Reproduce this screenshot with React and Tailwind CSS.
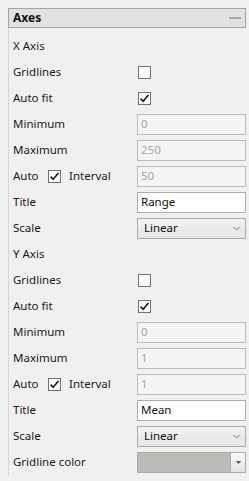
import React from "react";

const font = { fontFamily: '"Noto Sans", "Segoe UI", Arial, sans-serif' };

function Check({ checked }) {
  return (
    <div className="w-[13px] h-[13px] border border-[#707070] bg-white flex items-center justify-center shrink-0">
      {checked && (
        <svg width="11" height="11" viewBox="0 0 11 11">
          <path d="M1.6 5.6 L4.2 8.2 L9.4 2" fill="none" stroke="#202020" strokeWidth="1.7" />
        </svg>
      )}
    </div>
  );
}

function Row({ children }) {
  return <div className="h-[26px] flex items-center">{children}</div>;
}

function Label({ children }) {
  return <div className="w-[124px] shrink-0 text-[11.5px] text-[#1a1a1a] leading-none">{children}</div>;
}

function Disabled({ value }) {
  return (
    <div className="w-[109px] h-[21px] border border-[#bcbcbc] bg-[#f4f4f4] flex items-center pl-[3px] text-[11.5px] text-[#a6a6a6] leading-none">
      {value}
    </div>
  );
}

function TextBox({ value }) {
  return (
    <div className="w-[109px] h-[21px] border border-[#abadb3] bg-white flex items-center pl-[3px] text-[11.5px] text-[#101010] leading-none">
      {value}
    </div>
  );
}

function Combo({ value }) {
  return (
    <div className="w-[109px] h-[21px] border border-[#acacac] bg-gradient-to-b from-[#f2f2f2] to-[#e5e5e5] flex items-center justify-between pl-[6px] pr-[5px] text-[11.5px] text-[#101010] leading-none">
      <span>{value}</span>
      <svg width="7" height="5" viewBox="0 0 7 5">
        <path d="M0.5 1 L3.5 4 L6.5 1" fill="none" stroke="#707070" strokeWidth="1" />
      </svg>
    </div>
  );
}

function ColorPick() {
  return (
    <div className="w-[109px] h-[21px] border border-[#acacac] flex">
      <div className="flex-1 bg-[#bdbcb8]" />
      <div className="w-[15px] border-l border-[#acacac] bg-gradient-to-b from-[#fafafa] to-[#e2e2e2] flex items-center justify-center">
        <svg width="5" height="3" viewBox="0 0 5 3">
          <path d="M0 0 L5 0 L2.5 3 Z" fill="#505050" />
        </svg>
      </div>
    </div>
  );
}

function AxisBlock({ name, max, interval, title }) {
  return (
    <>
      <Row>
        <Label>{name}</Label>
      </Row>
      <Row>
        <Label>Gridlines</Label>
        <div className="ml-[1px]"><Check checked={false} /></div>
      </Row>
      <Row>
        <Label>Auto fit</Label>
        <div className="ml-[1px]"><Check checked /></div>
      </Row>
      <Row>
        <Label>Minimum</Label>
        <Disabled value="0" />
      </Row>
      <Row>
        <Label>Maximum</Label>
        <Disabled value={max} />
      </Row>
      <Row>
        <div className="w-[124px] shrink-0 flex items-center text-[11.5px] text-[#1a1a1a] leading-none">
          <span className="w-[35px]">Auto</span>
          <Check checked />
          <span className="ml-[8px]">Interval</span>
        </div>
        <Disabled value={interval} />
      </Row>
      <Row>
        <Label>Title</Label>
        <TextBox value={title} />
      </Row>
      <Row>
        <Label>Scale</Label>
        <Combo value="Linear" />
      </Row>
    </>
  );
}

export default function App() {
  return (
    <div className="w-[249px] h-[481px] bg-[#f0f0f0] overflow-hidden" style={font}>
      <div className="pt-[8px] pl-[8px] pr-[3px]">
        <div className="h-[20px] border border-[#a5a5a5] bg-[#e1e1e1] flex items-center justify-between pl-[4px] pr-[4px]">
          <span className="text-[12px] font-bold text-[#101010] leading-none">Axes</span>
          <div className="w-[12px] h-[2px] bg-[#a5a5a5]" />
        </div>
        <div className="border-l border-[#d6d6d6] pl-[4px] pt-[5px] h-[448px]">
          <AxisBlock name="X Axis" max="250" interval="50" title="Range" />
          <AxisBlock name="Y Axis" max="1" interval="1" title="Mean" />
          <Row>
            <Label>Gridline color</Label>
            <ColorPick />
          </Row>
        </div>
      </div>
    </div>
  );
}
